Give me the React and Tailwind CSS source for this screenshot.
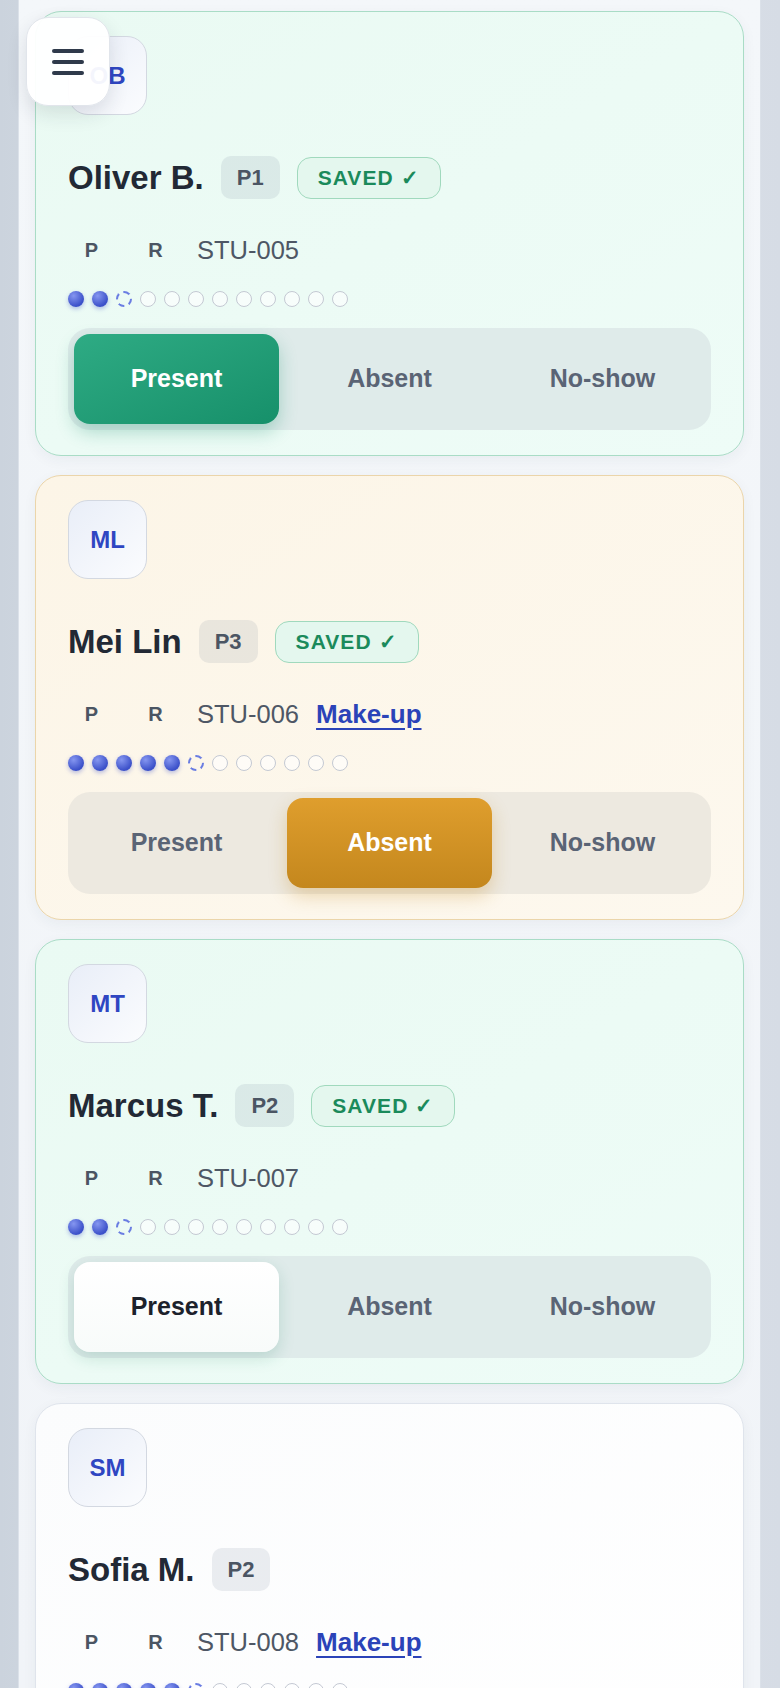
import React from "react";

const students = [
	{ initials: "OB", name: "Oliver B.", period: "P1", saved: true, id: "STU-005", makeup: false, filled: 2, status: "present", tone: "green" },
	{ initials: "ML", name: "Mei Lin", period: "P3", saved: true, id: "STU-006", makeup: true, filled: 5, status: "absent", tone: "amber" },
	{ initials: "MT", name: "Marcus T.", period: "P2", saved: true, id: "STU-007", makeup: false, filled: 2, status: "pending", tone: "green" },
	{ initials: "SM", name: "Sofia M.", period: "P2", saved: false, id: "STU-008", makeup: true, filled: 5, status: null, tone: "plain" }
];

const cardTone = {
	green: "bg-gradient-to-br from-[#eafaf3] to-[#eefcf7] border-[#a9dcc6]",
	amber: "bg-gradient-to-br from-[#fcf5e7] to-[#fdf8ee] border-[#ebd5aa]",
	plain: "bg-gradient-to-br from-[#fbfcfd] to-[#ffffff] border-[#dfe4ec]"
};

const segTone = {
	green: "bg-[#dfebea]",
	amber: "bg-[#ede9e0]",
	plain: "bg-[#eef1f5]"
};

function Dots({ filled }) {
	const dots = [];
	for (let i = 0; i < 12; i++) {
		if (i < filled) {
			dots.push(
				<span key={i} className="w-4 h-4 rounded-full bg-[radial-gradient(circle_at_35%_30%,#8596f0,#3b50c9_70%)] shadow-[0_2px_4px_rgba(59,80,201,0.35)]" />
			);
		} else if (i === filled) {
			dots.push(<span key={i} className="w-4 h-4 rounded-full border-2 border-dashed border-[#6a7de2]" />);
		} else {
			dots.push(<span key={i} className="w-4 h-4 rounded-full border-[1.5px] border-[#c4c9d3] bg-white/60" />);
		}
	}
	return <div className="mt-[22px] flex gap-2">{dots}</div>;
}

function Segment({ status, tone }) {
	const opts = [
		{ key: "present", label: "Present" },
		{ key: "absent", label: "Absent" },
		{ key: "noshow", label: "No-show" }
	];
	return (
		<div className={`mt-[21px] h-[102px] rounded-[22px] p-[6px] flex gap-2 ${segTone[tone]}`}>
			{opts.map(o => {
				let cls = "text-[#5a6475]";
				if (status === "present" && o.key === "present") {
					cls = "text-white bg-gradient-to-br from-[#2eab84] to-[#16906a] shadow-[0_8px_18px_rgba(22,144,106,0.3)]";
				} else if (status === "absent" && o.key === "absent") {
					cls = "text-white bg-gradient-to-b from-[#df9e2d] to-[#c4871d] shadow-[0_8px_18px_rgba(196,135,29,0.3)]";
				} else if (status === "pending" && o.key === "present") {
					cls = "text-[#1c222c] bg-gradient-to-b from-white to-[#f8fbfa] shadow-[0_6px_16px_rgba(20,120,90,0.18)]";
				}
				return (
					<button key={o.key} className={`flex-1 h-[90px] rounded-[16px] text-[25px] font-bold ${cls}`}>
						{o.label}
					</button>
				);
			})}
		</div>
	);
}

function StudentCard({ s }) {
	return (
		<div className={`border rounded-[26px] px-8 pt-6 pb-[25px] shadow-[0_4px_14px_rgba(30,50,80,0.05)] ${cardTone[s.tone]}`}>
			<div className="w-[79px] h-[79px] rounded-[20px] border-[1.5px] border-[#d3d8e1] bg-gradient-to-br from-[#e9eef8] to-[#fbfcfe] flex items-center justify-center text-[24px] font-bold text-[#2f46c2]">
				{s.initials}
			</div>
			<div className="mt-[41px] h-[43px] flex items-center gap-[17px]">
				<h2 className="text-[33px] font-bold text-[#222935] leading-none">{s.name}</h2>
				<span className="h-[43px] px-4 rounded-[10px] bg-[#64748b]/[0.12] flex items-center text-[22px] font-bold text-[#4b5563]">
					{s.period}
				</span>
				{s.saved && (
					<span className="h-[42px] px-5 rounded-[14px] border-[1.5px] border-[#a0d9bd] bg-[#e4f7ee] flex items-center text-[21px] font-bold tracking-[0.05em] text-[#1b8a5b]">
						SAVED ✓
					</span>
				)}
			</div>
			<div className="mt-8 h-[38px] flex items-center gap-[17px]">
				<span className="w-[47px] text-center text-[20px] font-bold text-[#4b5563]">P</span>
				<span className="w-[47px] text-center text-[20px] font-bold text-[#4b5563]">R</span>
				<span className="text-[25.5px] text-[#4e5765] ml-[1px]">{s.id}</span>
				{s.makeup && (
					<a className="text-[26px] font-bold text-[#2b43b8] underline underline-offset-[5px] decoration-2">Make-up</a>
				)}
			</div>
			<Dots filled={s.filled} />
			<Segment status={s.status} tone={s.tone} />
		</div>
	);
}

export default function App() {
	return (
		<div
			className="min-h-screen bg-gradient-to-r from-[#cbd3dd] via-[#e4e9ef] to-[#d6dce5] overflow-hidden"
			style={{ fontFamily: '"Liberation Sans", Arial, sans-serif' }}>
			<div className="relative ml-[18px] w-[743px] h-[1688px] bg-gradient-to-b from-[#f4f7fa] to-[#f1f4f8] border-x border-[#dbe1e9] px-4 pt-[11px] overflow-hidden">
				<div className="flex flex-col gap-[19px]">
					{students.map(s => (
						<StudentCard key={s.id} s={s} />
					))}
				</div>
			</div>
			<button className="absolute left-[26px] top-[17px] w-[84px] h-[89px] rounded-[22px] bg-white/95 border border-[#e1e5eb] shadow-[0_8px_20px_rgba(30,40,60,0.12)] flex flex-col items-center justify-center gap-[7px]">
				<span className="w-8 h-1 rounded-full bg-[#2f3a4b]" />
				<span className="w-8 h-1 rounded-full bg-[#2f3a4b]" />
				<span className="w-8 h-1 rounded-full bg-[#2f3a4b]" />
			</button>
		</div>
	);
}
